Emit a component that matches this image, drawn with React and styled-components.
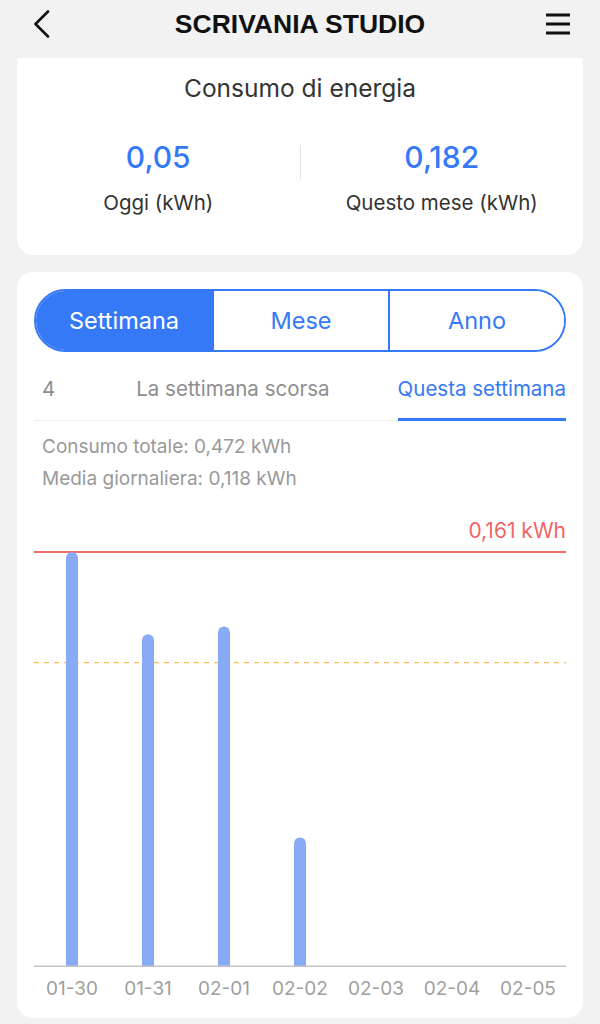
import React from "react";
import styled, { createGlobalStyle } from "styled-components";

const Global = createGlobalStyle`
  html, body { margin: 0; padding: 0; background: #f2f2f2; }
  body { font-family: Inter, "Noto Sans", "Liberation Sans", sans-serif; -webkit-font-smoothing: antialiased; }
  * { box-sizing: border-box; }
`;

const BLUE = "#3579f6";

const Page = styled.div`
  width: 600px;
  height: 1024px;
  overflow: hidden;
  background: #f2f2f2;
  display: flex;
  flex-direction: column;
`;

const Header = styled.header`
  height: 58px;
  display: flex;
  align-items: center;
  justify-content: space-between;
  padding: 0 28px 0 28px;
  flex: none;
`;

const Title = styled.h1`
  margin: 0;
  font-family: "Liberation Sans", Arial, sans-serif;
  font-weight: 700;
  font-size: 26.5px;
  color: #111;
  margin-top: -10px;
`;

const IconBtn = styled.div`
  width: 28px;
  height: 28px;
  display: flex;
  align-items: center;
  justify-content: center;
  margin-top: -10px;
`;

const Card = styled.section`
  margin: 0 17px;
  background: #fff;
  border-radius: ${(p) => (p.$flatTop ? "0 0 16px 16px" : "16px")};
  padding: ${(p) => p.$pad};
`;

const CardTitle = styled.div`
  text-align: center;
  font-size: 24.5px;
  line-height: 30px;
  color: #333;
`;

const Summary = styled.div`
  display: grid;
  grid-template-columns: 1fr 1px 1fr;
  margin-top: 34px;
`;

const Stat = styled.div`
  display: flex;
  flex-direction: column;
  align-items: center;
`;

const StatValue = styled.div`
  font-size: 30px;
  font-weight: 500;
  line-height: 40px;
  color: ${BLUE};
`;

const StatLabel = styled.div`
  margin-top: 13px;
  font-size: 20.5px;
  line-height: 26px;
  color: #333;
`;

const VDivider = styled.div`
  width: 1px;
  height: 35px;
  background: #e4e4e4;
  margin-top: 8px;
`;

const Gap = styled.div`
  height: 17px;
  flex: none;
`;

const Segmented = styled.div`
  display: grid;
  grid-template-columns: 1fr 1fr 1fr;
  height: 63px;
  border: 2px solid ${BLUE};
  border-radius: 32px;
  overflow: hidden;
`;

const Segment = styled.div`
  display: flex;
  align-items: center;
  justify-content: center;
  font-size: 23.5px;
  color: ${(p) => (p.$active ? "#fff" : BLUE)};
  background: ${(p) => (p.$active ? BLUE : "#fff")};
  & + & { border-left: 2px solid ${BLUE}; }
`;

const Tabs = styled.div`
  display: flex;
  align-items: flex-end;
  margin-top: 12px;
  border-bottom: 1px solid #eeeeee;
`;

const Tab = styled.div`
  font-size: 20.5px;
  line-height: 26px;
  padding: 12px 0 16px;
  margin-bottom: -1px;
  color: ${(p) => (p.$active ? BLUE : "#8e8e8e")};
  border-bottom: 3px solid ${(p) => (p.$active ? BLUE : "transparent")};
  margin-left: ${(p) => p.$ml || "0"};
`;

const Info = styled.div`
  margin-top: 10px;
  padding-left: 8px;
  font-size: 19px;
  line-height: 32px;
  color: #999;
`;

const ThresholdLabel = styled.div`
  margin-top: 23px;
  text-align: right;
  font-size: 21px;
  line-height: 26px;
  color: #ef6565;
`;

const Plot = styled.svg`
  display: block;
  margin-top: 2px;
`;

const XAxis = styled.div`
  display: grid;
  grid-template-columns: repeat(7, 1fr);
  margin-top: 10px;
`;

const XLabel = styled.div`
  text-align: center;
  font-size: 19px;
  line-height: 24px;
  color: #a0a0a0;
`;

const data = [
  { d: "01-30", v: 0.161 },
  { d: "01-31", v: 0.129 },
  { d: "02-01", v: 0.132 },
  { d: "02-02", v: 0.05 },
  { d: "02-03", v: 0 },
  { d: "02-04", v: 0 },
  { d: "02-05", v: 0 },
];

function Chart() {
  const W = 532;
  const H = 421;
  const top = 6;
  const base = 420;
  const max = 0.161;
  const avg = 0.118;
  const slot = W / 7;
  const y = (v) => base - ((base - top) * v) / max;
  return (
    <Plot width={W} height={H} viewBox={`0 0 ${W} ${H}`}>
      <line x1="0" x2={W} y1={top} y2={top} stroke="#f06a6a" strokeWidth="2" />
      <line
        x1="0"
        x2={W}
        y1={y(avg)}
        y2={y(avg)}
        stroke="#f7bd63"
        strokeWidth="1.2"
        strokeDasharray="5 5"
      />
      {data.map((p, i) =>
        p.v > 0 ? (
          <path
            key={p.d}
            d={`M${slot * i + slot / 2 - 6} ${base} V${y(p.v) + 6} a6 6 0 0 1 12 0 V${base} Z`}
            fill="#89aaf5"
          />
        ) : null
      )}
      <line x1="0" x2={W} y1={base + 0.25} y2={base + 0.25} stroke="#c4c4c4" strokeWidth="1.5" />
    </Plot>
  );
}

export default function App() {
  return (
    <>
      <Global />
      <Page>
        <Header>
          <IconBtn>
            <svg width="20" height="28" viewBox="0 0 20 28">
              <path d="M16 1.5 L3.5 14 L16 26.5" fill="none" stroke="#111" strokeWidth="2.6" strokeLinecap="round" strokeLinejoin="round" />
            </svg>
          </IconBtn>
          <Title>SCRIVANIA STUDIO</Title>
          <IconBtn>
            <svg width="26" height="24" viewBox="0 0 26 24">
              <path d="M1 3 H25 M1 12 H25 M1 21 H25" stroke="#111" strokeWidth="3" />
            </svg>
          </IconBtn>
        </Header>

        <Card $flatTop $pad="15px 0 39px">
          <CardTitle>Consumo di energia</CardTitle>
          <Summary>
            <Stat>
              <StatValue>0,05</StatValue>
              <StatLabel>Oggi (kWh)</StatLabel>
            </Stat>
            <VDivider />
            <Stat>
              <StatValue>0,182</StatValue>
              <StatLabel>Questo mese (kWh)</StatLabel>
            </Stat>
          </Summary>
        </Card>

        <Gap />

        <Card $pad="17px 17px 17px">
          <Segmented>
            <Segment $active>Settimana</Segment>
            <Segment>Mese</Segment>
            <Segment>Anno</Segment>
          </Segmented>
          <Tabs>
            <Tab $ml="8px">4</Tab>
            <Tab $ml="81px">La settimana scorsa</Tab>
            <Tab $active $ml="auto">Questa settimana</Tab>
          </Tabs>
          <Info>
            <div>Consumo totale: 0,472 kWh</div>
            <div>Media giornaliera: 0,118 kWh</div>
          </Info>
          <ThresholdLabel>0,161 kWh</ThresholdLabel>
          <Chart />
          <XAxis>
            {data.map((p) => (
              <XLabel key={p.d}>{p.d}</XLabel>
            ))}
          </XAxis>
        </Card>
      </Page>
    </>
  );
}
